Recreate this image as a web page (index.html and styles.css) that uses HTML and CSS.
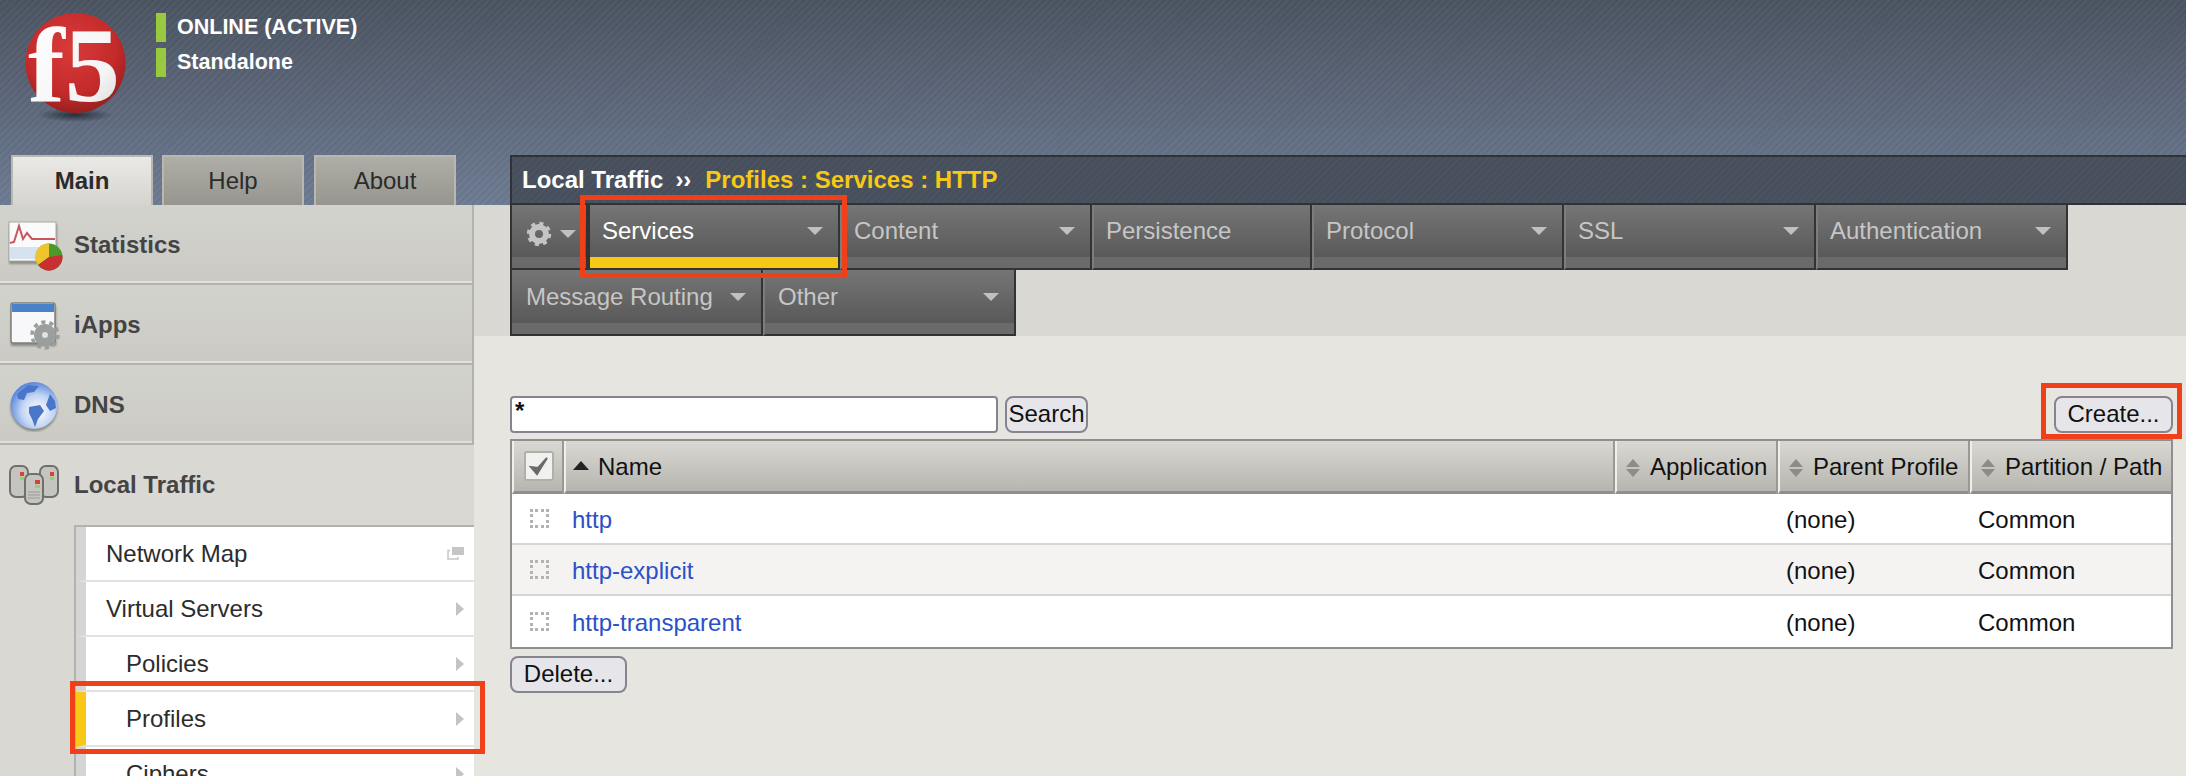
FILE: index.html
```html
<!DOCTYPE html>
<html lang="en">
<head>
    <meta charset="UTF-8">
    <meta name="viewport" content="width=device-width, initial-scale=1.0">
    <title>Local Traffic : Profiles : Services : HTTP</title>
    <link rel="stylesheet" href="styles.css">
</head>
<body>
    <header class="top">
        <div class="brand">
            <svg class="logo" viewBox="0 -13 110 140" width="110" height="140">
                <defs>
                    <radialGradient id="ball" cx="45%" cy="35%" r="70%">
                        <stop offset="0" stop-color="#d93a3a"/>
                        <stop offset="0.65" stop-color="#c42a2a"/>
                        <stop offset="1" stop-color="#8f1d1d"/>
                    </radialGradient>
                    <linearGradient id="f5fill" x1="0" y1="0" x2="1" y2="1">
                        <stop offset="0" stop-color="#ffffff"/>
                        <stop offset="0.7" stop-color="#f4f4f4"/>
                        <stop offset="1" stop-color="#d0d0d0"/>
                    </linearGradient>
                    <radialGradient id="ballshadow">
                        <stop offset="0" stop-color="#1e2530" stop-opacity="0.85"/>
                        <stop offset="1" stop-color="#1e2530" stop-opacity="0"/>
                    </radialGradient>
                    <filter id="soft"><feGaussianBlur stdDeviation="1"/></filter>
                    <filter id="blur-s"><feGaussianBlur stdDeviation="0.4"/></filter>
                </defs>
                <ellipse cx="51" cy="102" rx="38" ry="7" fill="url(#ballshadow)"/>
                <circle cx="51.5" cy="50" r="50" fill="url(#ball)"/>
                <text class="logo-text" x="4" y="88" textLength="92" lengthAdjust="spacingAndGlyphs" fill="url(#f5fill)">f5</text>
            </svg>
            <div class="status">
                <div class="status-line">ONLINE (ACTIVE)</div>
                <div class="status-line">Standalone</div>
            </div>
        </div>
        <div class="nav">
            <div class="main-tabs">
                <a class="main-tab main-tab-on">Main</a>
                <a class="main-tab">Help</a>
                <a class="main-tab">About</a>
            </div>
            <div class="crumb">
                <span>Local Traffic</span>
                <span class="crumb-sep">››</span>
                <span class="crumb-here">Profiles : Services : HTTP</span>
            </div>
        </div>
    </header>

    <div class="page">
        <aside class="side">
            <div class="side-head">
                <svg class="side-icon" viewBox="0 0 56 54" width="56" height="54">
                    <rect x="1" y="6" width="48" height="40" fill="#8a8a86" filter="url(#soft)"/>
                    <g filter="url(#blur-s)">
                        <rect x="1" y="4" width="47" height="39" fill="#fafafa" stroke="#a9a9a5"/>
                        <rect x="2" y="29" width="45" height="12" fill="#d5e2f0"/>
                        <path d="M2 25 L6 24 L11 8 L15 21 L19 15 L24 21 L47 21" fill="none" stroke="#c9565c" stroke-width="2"/>
                        <circle cx="41" cy="39" r="13.5" fill="#4d9a2a"/>
                        <path d="M41 39 V25.5 A13.5 13.5 0 0 0 30 47 Z" fill="#eec52e"/>
                        <path d="M41 39 L30 47 A13.5 13.5 0 0 0 54.3 37 Z" fill="#c92f33"/>
                    </g>
                </svg>
                <span>Statistics</span>
            </div>
            <div class="side-head">
                <svg class="side-icon" viewBox="0 0 56 54" width="56" height="54">
                    <rect x="3" y="8" width="45" height="40" fill="#8a8a86" filter="url(#soft)"/>
                    <g filter="url(#blur-s)">
                        <rect x="3" y="5" width="44" height="40" rx="2" fill="#f8f8fb" stroke="#7f7f7b" stroke-width="1.5"/>
                        <rect x="4" y="6" width="42" height="8" fill="#4a82c8"/>
                        <circle cx="37" cy="37" r="11" fill="#9a9e9c"/>
                        <circle cx="37" cy="37" r="13" fill="none" stroke="#9a9e9c" stroke-width="3.5" stroke-dasharray="4.2 3.96"/>
                        <circle cx="37" cy="37" r="3" fill="#dfe2e0"/>
                    </g>
                </svg>
                <span>iApps</span>
            </div>
            <div class="side-head">
                <svg class="side-icon" viewBox="0 0 56 54" width="56" height="54">
                    <defs>
                        <radialGradient id="globe" cx="58%" cy="62%" r="62%">
                            <stop offset="0" stop-color="#ffffff"/>
                            <stop offset="0.55" stop-color="#c3d5f3"/>
                            <stop offset="1" stop-color="#5b88db"/>
                        </radialGradient>
                    </defs>
                    <circle cx="26" cy="30" r="23.5" fill="#8a8a86" filter="url(#soft)"/>
                    <g filter="url(#blur-s)">
                        <circle cx="26" cy="27.5" r="23.5" fill="url(#globe)"/>
                        <path d="M9 16 L20 7 L31 8 L26 14 L19 15 L16 22 L10 21 Z M21 29 L32 27 L36 33 L30 41 L27 49 L24 41 L21 35 Z M42 16 L47 23 L48 30 L42 33 L38 27 Z" fill="#4a76c8"/>
                    </g>
                </svg>
                <span>DNS</span>
            </div>
            <div class="side-head side-head-on">
                <svg class="side-icon" viewBox="0 0 56 54" width="56" height="54">
                    <g filter="url(#blur-s)">
                        <g fill="#c4c4c0" stroke="#6f6f6a" stroke-width="2">
                            <rect x="2" y="8" width="18" height="31" rx="6"/>
                            <rect x="32" y="8" width="18" height="31" rx="6"/>
                            <rect x="17" y="16" width="18" height="30" rx="6"/>
                        </g>
                        <g fill="#d8403c">
                            <rect x="12" y="14" width="4" height="4"/>
                            <rect x="42" y="14" width="4" height="4"/>
                            <rect x="27" y="22" width="5" height="4"/>
                        </g>
                        <g fill="#9ccf5a">
                            <rect x="12" y="19" width="4" height="3"/>
                            <rect x="42" y="19" width="4" height="3"/>
                            <rect x="27" y="27" width="5" height="3"/>
                        </g>
                        <path d="M20 34 H32 M20 37 H32 M20 40 H32" stroke="#9a9a95" stroke-width="1"/>
                    </g>
                </svg>
                <span>Local Traffic</span>
            </div>
            <ul class="sub">
                <li class="sub-item">
                    <span>Network Map</span>
                    <svg class="win-icon" viewBox="0 0 17 13" width="17" height="13">
                        <rect x="5" y="0" width="12" height="8" fill="#c6c6c6"/>
                        <path d="M3 3.5 H1 V12 H11 V10" fill="none" stroke="#c6c6c6" stroke-width="1.5"/>
                    </svg>
                </li>
                <li class="sub-item"><span>Virtual Servers</span><i class="chev"></i></li>
                <li class="sub-item sub-deep"><span>Policies</span><i class="chev"></i></li>
                <li class="sub-item sub-deep sub-on mark mark-profiles"><span>Profiles</span><i class="chev"></i></li>
                <li class="sub-item sub-deep"><span>Ciphers</span><i class="chev"></i></li>
            </ul>
        </aside>

        <main class="content">
            <div class="tab-band">
                <div class="tab-row">
                    <div class="tab tab-gear">
                        <svg viewBox="0 0 26 26" width="26" height="26">
                            <circle cx="13" cy="13" r="7" fill="none" stroke="#c4c4c4" stroke-width="6"/>
                            <circle cx="13" cy="13" r="10.5" fill="none" stroke="#c4c4c4" stroke-width="3.5" stroke-dasharray="4 4.25"/>
                        </svg>
                        <i class="caret"></i>
                    </div>
                    <div class="tab tab-on mark mark-services"><span>Services</span><i class="caret"></i></div>
                    <div class="tab"><span>Content</span><i class="caret"></i></div>
                    <div class="tab tab-short"><span>Persistence</span></div>
                    <div class="tab"><span>Protocol</span><i class="caret"></i></div>
                    <div class="tab"><span>SSL</span><i class="caret"></i></div>
                    <div class="tab"><span>Authentication</span><i class="caret"></i></div>
                </div>
                <div class="tab-row tab-row-low">
                    <div class="tab"><span>Message Routing</span><i class="caret"></i></div>
                    <div class="tab"><span>Other</span><i class="caret"></i></div>
                </div>
            </div>

            <div class="tools">
                <div class="search">
                    <input class="search-box" type="text" value="*">
                    <button class="btn btn-search">Search</button>
                </div>
                <button class="btn btn-create mark mark-create">Create...</button>
            </div>

            <table class="list">
                <colgroup>
                    <col class="col-check">
                    <col>
                    <col class="col-app">
                    <col class="col-parent">
                    <col class="col-path">
                </colgroup>
                <thead>
                    <tr>
                        <th class="cell-check">
                            <span class="check-all">
                                <svg viewBox="0 0 24 24" width="24" height="24"><path d="M4 13 L10 20 L20 4 L11 14 Z" fill="#6a6a6a" stroke="#6a6a6a" stroke-width="2"/></svg>
                            </span>
                        </th>
                        <th><i class="sort-up"></i>Name</th>
                        <th><i class="sort"></i>Application</th>
                        <th><i class="sort"></i>Parent Profile</th>
                        <th><i class="sort"></i>Partition / Path</th>
                    </tr>
                </thead>
                <tbody>
                    <tr>
                        <td class="cell-check"><span class="check"></span></td>
                        <td><a href="#">http</a></td>
                        <td></td>
                        <td>(none)</td>
                        <td>Common</td>
                    </tr>
                    <tr>
                        <td class="cell-check"><span class="check"></span></td>
                        <td><a href="#">http-explicit</a></td>
                        <td></td>
                        <td>(none)</td>
                        <td>Common</td>
                    </tr>
                    <tr>
                        <td class="cell-check"><span class="check"></span></td>
                        <td><a href="#">http-transparent</a></td>
                        <td></td>
                        <td>(none)</td>
                        <td>Common</td>
                    </tr>
                </tbody>
            </table>

            <button class="btn btn-delete">Delete...</button>
        </main>
    </div>
</body>
</html>
```

FILE: styles.css
```css
* {
    box-sizing: border-box;
}

html, body {
    margin: 0;
    height: 776px;
    overflow: hidden;
}

body {
    font-family: "Liberation Sans", Arial, sans-serif;
    font-size: 24px;
    background: #e6e5e0;
    color: #111;
}

/* header */
.top {
    height: 205px;
    display: flex;
    flex-direction: column;
    justify-content: space-between;
    background:
        repeating-linear-gradient(135deg, rgba(255, 255, 255, 0.03) 0 2px, rgba(0, 0, 0, 0.015) 2px 5px),
        linear-gradient(#4b5361, #6d7b92);
}

.brand {
    display: flex;
    height: 140px;
    padding-left: 24px;
}

.logo {
    margin-right: 22px;
}

.logo-text {
    font-family: "Liberation Serif", serif;
    font-weight: bold;
    font-size: 106px;
}

.status {
    padding-top: 13px;
}

.status-line {
    height: 29px;
    margin-bottom: 6px;
    padding-left: 11px;
    border-left: 10px solid #99c940;
    color: white;
    font-weight: bold;
    font-size: 21.5px;
    line-height: 29px;
}

.nav {
    display: flex;
    align-items: flex-end;
}

.main-tabs {
    width: 510px;
    padding-left: 11px;
    display: flex;
    gap: 9px;
}

.main-tab {
    width: 142px;
    height: 50px;
    border: 2px solid #b8b8b3;
    border-bottom: 0;
    background: linear-gradient(#aeaea7, #96968f);
    color: #2b2b2b;
    text-align: center;
    line-height: 48px;
}

.main-tab:last-child {
    margin-left: 1px;
}

.main-tab-on {
    background: linear-gradient(#ebe9e6, #d5d4cf);
    font-weight: bold;
}

.crumb {
    flex: 1;
    height: 50px;
    border: 2px solid #2f3237;
    border-right: 0;
    padding-left: 10px;
    display: flex;
    align-items: center;
    gap: 12px;
    background:
        repeating-linear-gradient(135deg, rgba(255, 255, 255, 0.025) 0 2px, transparent 2px 5px),
        #474f5c;
    color: white;
    font-weight: bold;
}

.crumb-sep {
    margin-right: 2px;
}

.crumb-here {
    color: #f7c815;
}

/* sidebar */
.page {
    display: flex;
    height: 571px;
}

.side {
    width: 474px;
    flex: none;
    background: #d9d8d3;
    position: relative;
    z-index: 1;
}

.side-head {
    height: 80px;
    display: flex;
    align-items: center;
    padding: 1px 0 0 8px;
    gap: 10px;
    background: linear-gradient(#d3d3ce, #cbcac4);
    border-right: 2px solid #b3b3ae;
    border-bottom: 2px solid #b3b3ae;
    box-shadow: inset 0 -2px 0 #e0e0db;
    color: #444;
    font-weight: bold;
}

.side-head-on {
    background: #d9d8d3;
    border: 0;
    box-shadow: none;
    padding-top: 0;
}

.side-icon {
    flex: none;
}

.sub {
    list-style: none;
    margin: 0 0 0 74px;
    padding: 0;
    border-top: 2px solid #b2b2ae;
    border-left: 2px solid #b2b2ae;
}

.sub-item {
    height: 55px;
    display: flex;
    align-items: center;
    justify-content: space-between;
    padding: 0 10px 0 20px;
    background: white;
    border-left: 10px solid #d5d5d3;
    border-bottom: 2px solid #e2e2e0;
    color: #2c2c2c;
}

.sub-deep {
    padding-left: 40px;
}

.sub-on {
    border-left-color: #f7c815;
}

.chev {
    width: 0;
    height: 0;
    border-left: 8px solid #c4c4c4;
    border-top: 7px solid transparent;
    border-bottom: 7px solid transparent;
}

/* red annotation boxes */
.mark {
    position: relative;
}

.mark::after {
    content: "";
    position: absolute;
    border: 5px solid #f04019;
    pointer-events: none;
}

.mark-profiles::after {
    top: -11px;
    bottom: -9px;
    left: -16px;
    right: -11px;
}

.mark-services::after {
    top: -10px;
    bottom: -10px;
    left: -10px;
    right: -9px;
}

.mark-create::after {
    top: -15px;
    bottom: -8px;
    left: -15px;
    right: -11px;
}

/* tabs */
.content {
    flex: 1;
    min-width: 0;
}

.tab-band {
    background: #d9d8d3;
    padding-left: 36px;
    height: 131px;
}

.tab-row {
    display: flex;
    height: 65px;
}

.tab-row-low {
    height: 66px;
}

.tab {
    width: 252px;
    height: 100%;
    padding: 0 15px 12px 12px;
    display: flex;
    align-items: center;
    justify-content: space-between;
    background: linear-gradient(#757575, #595959 83%, #6a6a6a 83%);
    border-left: 2px solid #7d7d7d;
    border-right: 2px solid #333;
    border-bottom: 2px solid #333;
    color: #c6c6c6;
}

.tab-row .tab:first-child {
    border-left-color: #333;
    padding-left: 14px;
}

.tab-row-low .tab {
    width: 253px;
    padding-bottom: 10px;
}

.tab-row-low .tab + .tab {
    padding-left: 13px;
}

.tab-row .tab-gear {
    width: 78px;
    padding: 0 10px 6px 12px;
}

.tab-short {
    width: 220px;
}

.tab-on {
    color: white;
    border-left: 2px solid #333;
    border-bottom: 2px solid #333;
    background: linear-gradient(#757575, #595959 83%, #f7c815 83%);
}

.caret {
    width: 0;
    height: 0;
    flex: none;
    border-top: 8px solid #c0c0c0;
    border-left: 8px solid transparent;
    border-right: 8px solid transparent;
}

/* list */
.tools {
    display: flex;
    justify-content: space-between;
    margin: 60px 13px 6px 36px;
}

.search {
    display: flex;
    gap: 7px;
}

.search-box {
    width: 488px;
    height: 37px;
    padding: 0 0 8px 3px;
    border: 2px solid #85858f;
    border-radius: 4px;
    font: bold 24px "Liberation Sans", Arial, sans-serif;
    background: white;
    color: #111;
}

.btn {
    height: 37px;
    padding: 0 0 2px;
    border: 2px solid #85858f;
    border-radius: 8px;
    background: #e6e6ea;
    color: #111;
    font: 24px "Liberation Sans", Arial, sans-serif;
}

.btn-search {
    width: 83px;
}

.btn-create {
    width: 119px;
}

.btn-delete {
    display: block;
    width: 117px;
    margin: 7px 0 0 36px;
}

.list {
    width: 1663px;
    margin-left: 36px;
    table-layout: fixed;
    border-collapse: separate;
    border-spacing: 0;
    border: 2px solid #8f8f8f;
}

.col-check {
    width: 52px;
}

.col-app {
    width: 163px;
}

.col-parent {
    width: 192px;
}

.col-path {
    width: 201px;
}

.list th {
    height: 53px;
    padding: 2px 0 0 7px;
    text-align: left;
    font-weight: normal;
    background: linear-gradient(#d9d8d3, #b6b5af);
    border-left: 2px solid #f0efeb;
    border-bottom: 3px solid #8f8f8f;
    box-shadow: -2px 0 0 #9a9a95;
    white-space: nowrap;
}

.list th + th + th {
    padding-left: 9px;
}

.list th:first-child {
    box-shadow: none;
}

.list td {
    height: 51px;
    padding: 2px 0 0 8px;
    background: white;
    border-bottom: 2px solid #d6d6d4;
}

.list tbody tr:nth-child(2) td {
    background: #f4f3f1;
}

.list tbody tr:last-child td {
    border-bottom: 0;
}

.list a {
    color: #2b50c8;
    text-decoration: none;
}

.list th.cell-check {
    padding: 0 0 0 10px;
}

.list td.cell-check {
    padding: 0 0 0 18px;
}

.check-all {
    width: 30px;
    height: 30px;
    display: flex;
    align-items: center;
    justify-content: center;
    border: 2px solid #b0b0ab;
    border-radius: 3px;
    background: #f1f1ef;
}

.check {
    display: block;
    width: 19px;
    height: 19px;
    border: 3px dotted #b3b3b3;
}

.sort-up {
    display: inline-block;
    vertical-align: 5px;
    margin-right: 9px;
    border-bottom: 9px solid #222;
    border-left: 8px solid transparent;
    border-right: 8px solid transparent;
}

.sort {
    display: inline-block;
    position: relative;
    width: 14px;
    height: 18px;
    vertical-align: -2px;
    margin-right: 10px;
}

.sort::before,
.sort::after {
    content: "";
    position: absolute;
    left: 0;
    border-left: 7px solid transparent;
    border-right: 7px solid transparent;
}

.sort::before {
    top: 0;
    border-bottom: 8px solid #8d8d88;
}

.sort::after {
    bottom: 0;
    border-top: 8px solid #8d8d88;
}
```
